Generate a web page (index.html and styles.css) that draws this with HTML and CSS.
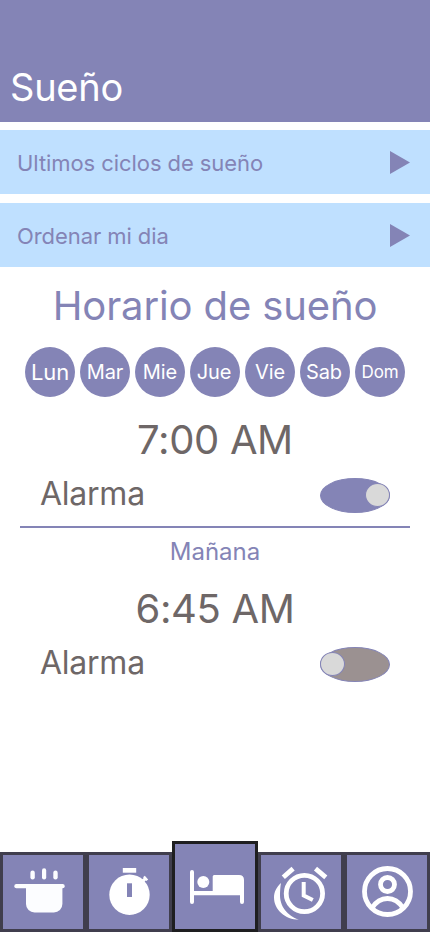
FILE: index.html
```html
<!DOCTYPE html>
<html lang="es">
<head>
<meta charset="utf-8">
<title>Sueño</title>
<link rel="stylesheet" href="styles.css">
</head>
<body>
<header class="header"><h1 class="header-title">Sueño</h1></header>
<main class="main">
  <div class="links">
    <a class="link"><span>Ultimos ciclos de sueño</span><svg class="arrow" viewBox="0 0 20 24"><path d="M0 0 20 11.5 0 23z"/></svg></a>
    <a class="link"><span>Ordenar mi dia</span><svg class="arrow" viewBox="0 0 20 24"><path d="M0 0 20 11.5 0 23z"/></svg></a>
  </div>
  <h2 class="title">Horario de sueño</h2>
  <div class="days">
    <span class="day day-large">Lun</span><span class="day">Mar</span><span class="day">Mie</span><span class="day day-nudge">Jue</span><span class="day">Vie</span><span class="day day-nudge">Sab</span><span class="day day-small">Dom</span>
  </div>
  <section class="alarm">
    <div class="time">7:00 AM</div>
    <div class="row"><span>Alarma</span><span class="toggle on"><i class="knob"></i></span></div>
  </section>
  <hr class="rule">
  <div class="subtitle">Mañana</div>
  <section class="alarm">
    <div class="time">6:45 AM</div>
    <div class="row"><span>Alarma</span><span class="toggle"><i class="knob"></i></span></div>
  </section>
</main>
<nav class="nav">
  <a class="tab"><svg class="icon" viewBox="3 855 80 74"><g fill="#fcfdff"><rect x="14.3" y="884" width="50.4" height="4.3" rx="2.1"/><path d="M26 886h36.4v18a8.500 8.500 0 0 1-8.500 8.500H34.500a8.500 8.500 0 0 1-8.500-8.500z"/><rect x="30.400" y="870.500" width="4.400" height="9" rx="2.200"/><rect x="42" y="868.300" width="4.200" height="11.200" rx="2.100"/><rect x="53.300" y="870.500" width="4.400" height="9" rx="2.200"/></g></svg></a>
  <a class="tab"><svg class="icon" viewBox="89 855 80 74"><g fill="#fff"><circle cx="129.500" cy="894.700" r="20.200"/><rect x="122.800" y="868" width="13.400" height="4.700"/><path d="m140 879.500 1.500.2 2.300-1.700-.8-.8 1.800-1.500 3.400 3.700-1.800 1.700-.8-.7-1.800 2 1 2.100z"/></g><path d="M127 883.300h5V897h-5z" fill="#8484b6"/></svg></a>
  <a class="tab active"><svg class="icon" viewBox="175 844 80 85"><path fill="#fff" d="M190 872a2 2 0 0 1 4 0v19h18.700v-14.500q0-1.500 1.500-1.500H239q5 0 5 5v22a2 2 0 0 1-4 0v-6.800h-46v6.800a2 2 0 0 1-4 0z"/><circle cx="203.300" cy="882" r="6" fill="#fff"/></svg></a>
  <a class="tab"><svg class="icon" viewBox="261 855 80 74"><g fill="none" stroke="#fff" stroke-width="4.800"><circle cx="304.400" cy="893.500" r="18.200"/><path d="m283.300 877.300 9.800-8.700M315.500 868.600l10.300 8.700"/><path d="M303.700 882v13.500l9.100 4.500" stroke-width="4"/></g><path fill="#fff" d="M281 883c-4.500 4-7 9-7 14.500 0 12 11 22.200 25 22.200-8-2.500-19-10.500-19-24.200 0-4.500.3-9 1-12.500z"/></svg></a>
  <a class="tab"><svg class="icon" viewBox="347 855 80 74"><g fill="none" stroke="#fff" stroke-width="4.800"><circle cx="387.500" cy="891.500" r="23"/><circle cx="387.500" cy="884.500" r="7"/><path d="M372 908q6-9.500 15.500-9.500T403 908"/></g></svg></a>
</nav>
</body>
</html>
```
FILE: styles.css
```css
* { box-sizing: border-box; }
body { margin: 0; min-height: 932px; display: flex; flex-direction: column; background: #fff; color: #6e6767; font-family: Inter, sans-serif; font-weight: 400; }
h1, h2 { margin: 0; font-weight: 400; }
.header { height: 122px; padding: 64px 10px 0; background: #8484b6; color: #fff; }
.header-title { font-size: 38px; line-height: 46px; letter-spacing: -0.25px; }
.main { flex: 1; }
.links { display: flex; flex-direction: column; gap: 9px; padding-top: 8px; }
.link { height: 64px; padding: 2px 20px 0 17px; display: flex; align-items: center; justify-content: space-between; background: #bfe0ff; color: #8484b6; font-size: 22px; letter-spacing: -0.07px; }
.arrow { width: 20px; height: 24px; fill: #8484b6; }
.title { margin-top: 15px; text-align: center; color: #8484b6; font-size: 40px; line-height: 48px; letter-spacing: -0.13px; }
.days { display: flex; justify-content: center; gap: 5px; margin-top: 17px; }
.day { width: 50px; height: 50px; border-radius: 50%; display: flex; align-items: center; justify-content: center; background: #8484b6; color: #fff; font-size: 20px; letter-spacing: -0.1px; }
.day-large { font-size: 22px; }
.day-small { font-size: 17px; }
.day-nudge { padding-right: 2px; }
.alarm { padding: 0 40px; }
.time { padding-top: 19px; text-align: center; font-size: 40px; line-height: 48px; letter-spacing: -0.35px; }
.row { height: 62px; padding-bottom: 3px; display: flex; align-items: center; justify-content: space-between; font-size: 32px; letter-spacing: -0.25px; }
.toggle { width: 70px; height: 35px; margin-top: 3px; border: 1px solid #8484b6; border-radius: 50%; background: #9b9191; display: flex; align-items: center; }
.on { background: #8484b6; justify-content: flex-end; }
.knob { width: 25px; height: 24px; border: 1px solid #8484b6; border-radius: 50%; background: #d9d9d9; margin: 0 -1px; }
.rule { height: 2px; margin: 0 20px; border: 0; background: #8484b6; }
.subtitle { margin-top: 9px; text-align: center; color: #8484b6; font-size: 24px; line-height: 29px; }
.nav { display: flex; align-items: flex-end; height: 91px; }
.tab { width: 86px; height: 80px; border: 3px solid #403e4d; background: #8484b6; }
.active { height: 91px; border-color: #1e1e20; }
.icon { display: block; width: 100%; height: 100%; }
```
